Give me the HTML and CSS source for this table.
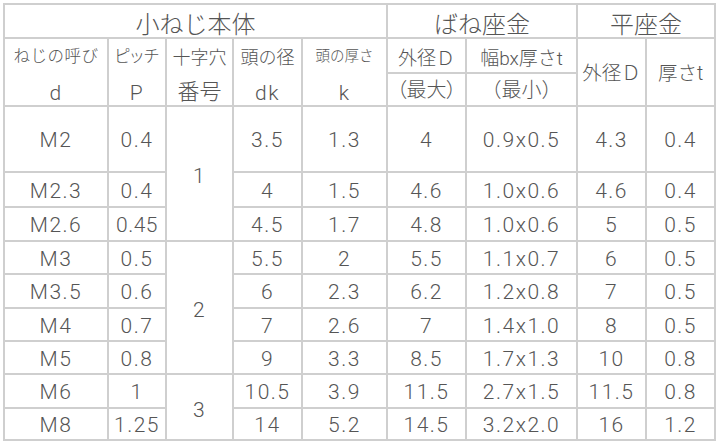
FILE: index.html
```html
<!DOCTYPE html>
<html lang="ja">
<head>
<meta charset="utf-8">
<title>小ねじ寸法表</title>
<link rel="stylesheet" href="styles.css">
</head>
<body>
<table class="spec">
  <colgroup>
    <col class="c-d"><col class="c-p"><col class="c-no"><col class="c-dk"><col class="c-k">
    <col class="c-sd"><col class="c-sbt"><col class="c-fd"><col class="c-ft">
  </colgroup>
  <tr class="r-a">
    <td colspan="5" class="title">小ねじ本体</td>
    <td colspan="2" class="title">ばね座金</td>
    <td colspan="2" class="title">平座金</td>
  </tr>
  <tr class="r-b">
    <td class="hd nob">ねじの呼び</td>
    <td class="hd nob palt">ピッチ</td>
    <td class="hd nob big">十字穴</td>
    <td class="hd nob big">頭の径</td>
    <td class="hd nob sm">頭の厚さ</td>
    <td class="hd2">外径Ｄ</td>
    <td class="hd2">幅bx厚さt</td>
    <td rowspan="2" class="hd3">外径Ｄ</td>
    <td rowspan="2" class="hd3">厚さt</td>
  </tr>
  <tr class="r-c">
    <td class="sym">d</td>
    <td class="sym">P</td>
    <td class="sym cjk">番号</td>
    <td class="sym">dk</td>
    <td class="sym">k</td>
    <td class="par palt">（最大）</td>
    <td class="par">（最小）</td>
  </tr>
  <tr class="r-m2">
    <td>M2</td><td>0.4</td><td rowspan="3" class="no">1</td><td>3.5</td><td>1.3</td><td>4</td><td>0.9x0.5</td><td>4.3</td><td>0.4</td>
  </tr>
  <tr class="r-35">
    <td>M2.3</td><td>0.4</td><td>4</td><td>1.5</td><td>4.6</td><td>1.0x0.6</td><td>4.6</td><td>0.4</td>
  </tr>
  <tr class="r-34">
    <td>M2.6</td><td class="tight">0.45</td><td>4.5</td><td>1.7</td><td>4.8</td><td>1.0x0.6</td><td>5</td><td>0.5</td>
  </tr>
  <tr class="r-33">
    <td>M3</td><td>0.5</td><td rowspan="4" class="no">2</td><td>5.5</td><td>2</td><td>5.5</td><td>1.1x0.7</td><td>6</td><td>0.5</td>
  </tr>
  <tr class="r-34">
    <td>M3.5</td><td>0.6</td><td>6</td><td>2.3</td><td>6.2</td><td>1.2x0.8</td><td>7</td><td>0.5</td>
  </tr>
  <tr class="r-33">
    <td>M4</td><td>0.7</td><td>7</td><td>2.6</td><td>7</td><td>1.4x1.0</td><td>8</td><td>0.5</td>
  </tr>
  <tr class="r-33">
    <td>M5</td><td>0.8</td><td>9</td><td>3.3</td><td>8.5</td><td>1.7x1.3</td><td>10</td><td>0.8</td>
  </tr>
  <tr class="r-34">
    <td>M6</td><td>1</td><td rowspan="2" class="no">3</td><td>10.5</td><td>3.9</td><td>11.5</td><td>2.7x1.5</td><td>11.5</td><td>0.8</td>
  </tr>
  <tr class="r-32">
    <td>M8</td><td>1.25</td><td>14</td><td>5.2</td><td>14.5</td><td>3.2x2.0</td><td>16</td><td>1.2</td>
  </tr>
</table>
</body>
</html>
```

FILE: styles.css
```css
html, body {
  margin: 0;
  padding: 0;
  background: #ffffff;
}
body {
  padding: 3px 0 0 3px;
  font-family: Roboto, "Liberation Sans", "Noto Sans CJK JP", sans-serif;
  font-weight: 300;
  color: #555555;
}
.spec {
  border-collapse: separate;
  border-spacing: 0;
  table-layout: fixed;
  width: 713px;
  border-top: 2px solid #cfcfcf;
  border-left: 2px solid #cfcfcf;
}
.c-d { width: 104px; }
.c-p { width: 58px; }
.c-no { width: 67px; }
.c-dk { width: 69px; }
.c-k { width: 85px; }
.c-sd { width: 79px; }
.c-sbt { width: 111px; }
.c-fd { width: 69px; }
.c-ft { width: 69px; }

.spec td {
  border-right: 2px solid #cfcfcf;
  border-bottom: 2px solid #cfcfcf;
  padding: 3px 0 0 0;
  text-align: center;
  vertical-align: middle;
  font-size: 21px;
  letter-spacing: 1.5px;
  line-height: 1;
  white-space: nowrap;
  overflow: hidden;
}
.spec td.nob { border-bottom: none; }

.r-a { height: 33px; }
.r-b { height: 35px; }
.r-c { height: 33px; }
.r-m2 { height: 66px; }
.r-35 { height: 35px; }
.r-34 { height: 34px; }
.r-33 { height: 33px; }
.r-32 { height: 32px; }

.spec td.title {
  font-size: 24px;
  letter-spacing: 0;
  padding-top: 8px;
}
.spec td.hd {
  font-size: 16.5px;
  letter-spacing: 0.5px;
  padding-top: 2px;
}
.spec td.hd.big { font-size: 18px; letter-spacing: 0; }
.spec td.hd.sm { font-size: 14.5px; letter-spacing: 0; }
.spec td.hd2 {
  font-size: 19px;
  letter-spacing: 0;
  padding-top: 5px;
}
.spec td.hd3 {
  font-size: 19.5px;
  letter-spacing: 0;
}
.spec td.sym {
  padding-top: 8px;
}
.spec td.sym.cjk {
  font-size: 22px;
  letter-spacing: 0;
  padding-top: 4px;
}
.spec td.par {
  font-size: 20px;
  letter-spacing: 0;
  padding-top: 1px;
}
.palt { font-feature-settings: "palt" 1; }
.spec td.tight { letter-spacing: 0.5px; }
.spec td.no { padding-top: 6px; }
```
